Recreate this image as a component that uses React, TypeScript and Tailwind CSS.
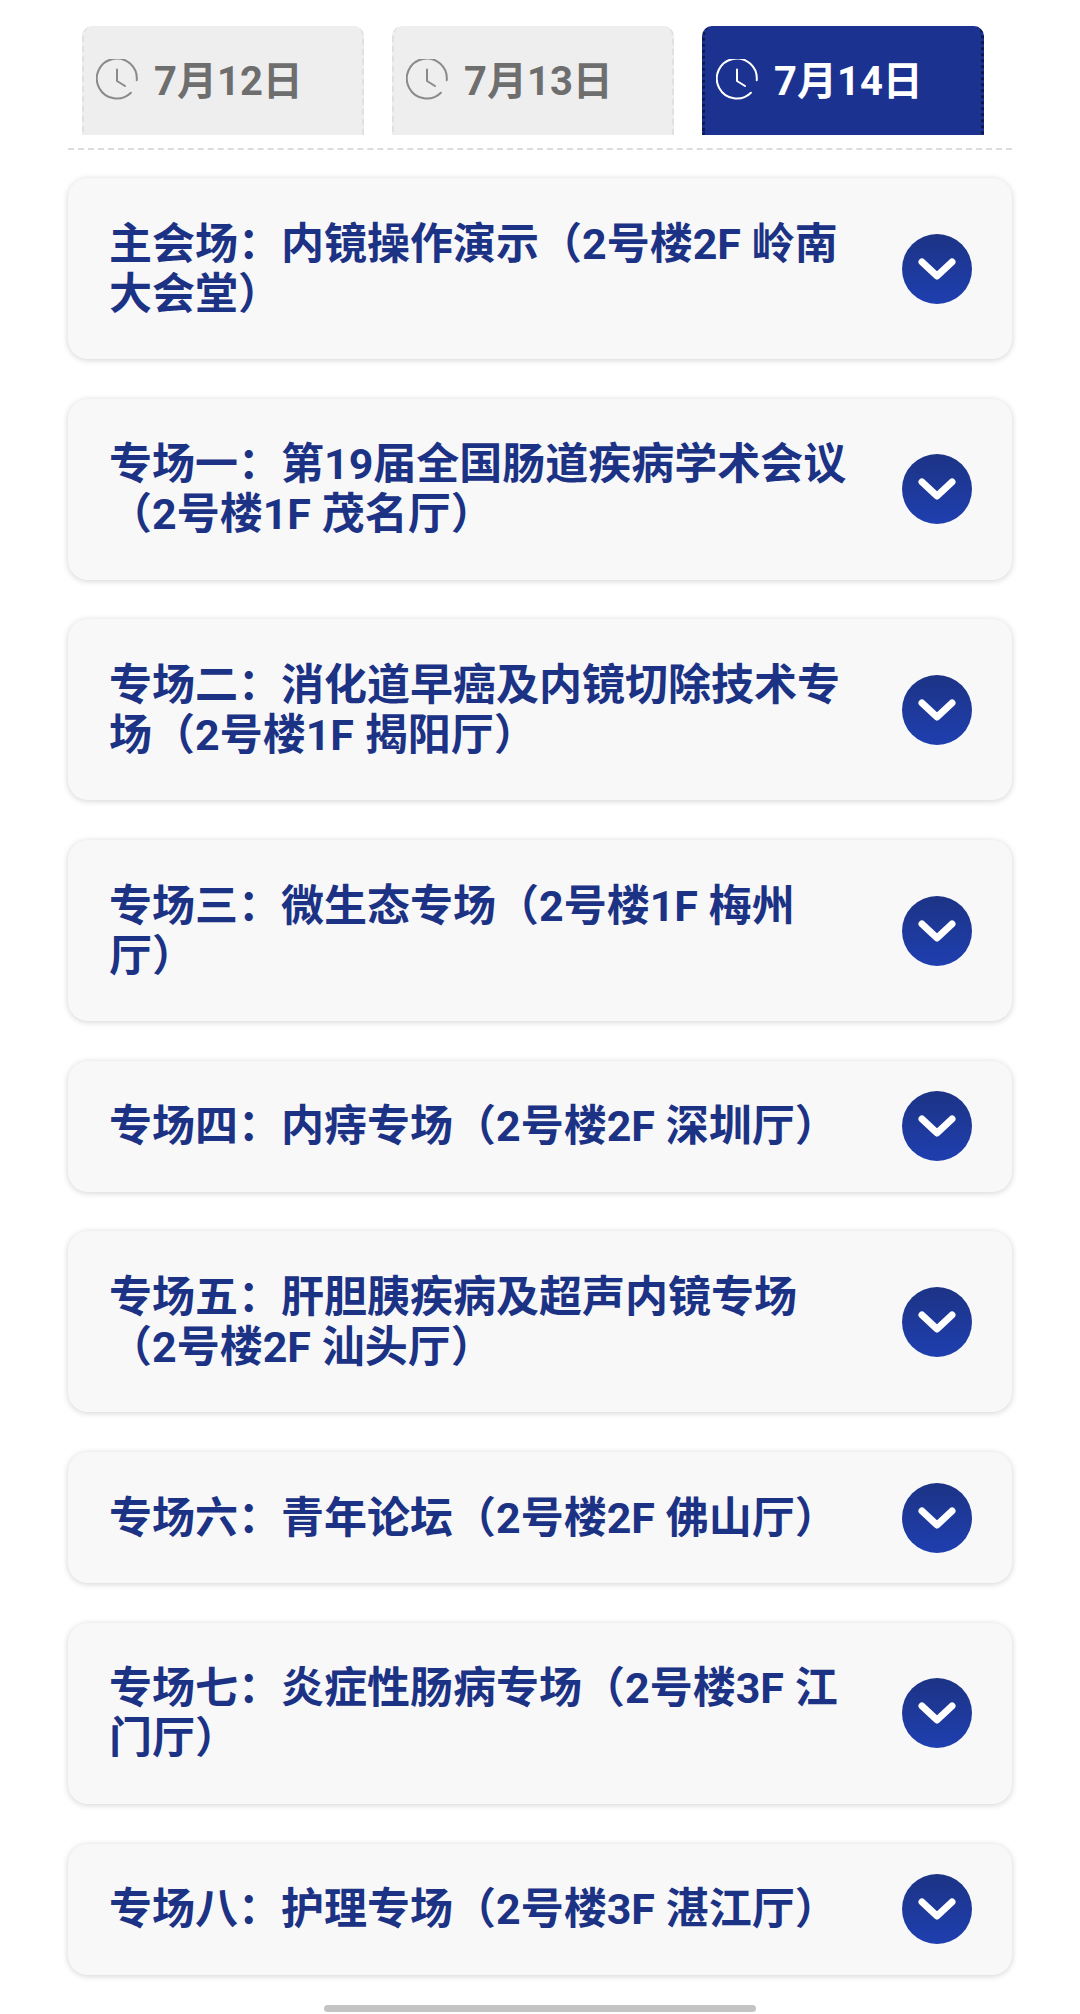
import React from "react";

const font = { fontFamily: 'Roboto, "Noto Sans CJK SC", "Noto Sans", sans-serif' };

const C = "\uFF1A";
const L = "\uFF08";
const R = "\uFF09";

const sessions = [
  `主会场${C}内镜操作演示${L}2号楼2F 岭南大会堂${R}`,
  `专场一${C}第19届全国肠道疾病学术会议${L}2号楼1F 茂名厅${R}`,
  `专场二${C}消化道早癌及内镜切除技术专场${L}2号楼1F 揭阳厅${R}`,
  `专场三${C}微生态专场${L}2号楼1F 梅州厅${R}`,
  `专场四${C}内痔专场${L}2号楼2F 深圳厅${R}`,
  `专场五${C}肝胆胰疾病及超声内镜专场${L}2号楼2F 汕头厅${R}`,
  `专场六${C}青年论坛${L}2号楼2F 佛山厅${R}`,
  `专场七${C}炎症性肠病专场${L}2号楼3F 江门厅${R}`,
  `专场八${C}护理专场${L}2号楼3F 湛江厅${R}`,
];

function Clock({ active }: { active: boolean }) {
  const c = active ? "#ffffff" : "#8a8a8a";
  return (
    <svg width="42" height="42" viewBox="0 0 42 42" fill="none" stroke={c} strokeWidth="2" strokeLinecap="round" strokeLinejoin="round" className="shrink-0">
      <path d="M33 35.5A20 20 0 1 1 40.5 24" transform="rotate(-8 21 21)" />
      <path d="M21 10.5V22l8 5" />
    </svg>
  );
}

function Tab({ label, active }: { label: string; active: boolean }) {
  return (
    <div
      className={
        active
          ? "w-[282px] h-[109px] pl-[11px] flex items-start pt-[33px] gap-[16px] rounded-t-[10px] bg-[#1c3290] border-x-[3px] border-dotted border-[#0e1a4d] text-white"
          : "w-[282px] h-[109px] pl-[12px] flex items-start pt-[33px] gap-[16px] rounded-t-[10px] bg-[#eeeeee] border-x-2 border-dashed border-[#e0e0e0] text-[#6e6e6e]"
      }
    >
      <Clock active={active} />
      <span className="text-[40px] leading-[46px] font-bold">{label}</span>
    </div>
  );
}

function Card({ text }: { text: string }) {
  return (
    <div className="mx-[68px] mb-[39.7px] flex items-center justify-between pl-[41px] pr-[40px] bg-[#f8f8f9] rounded-[20px] shadow-[0_1px_6px_rgba(0,0,0,0.18)]">
      <div className="w-[740px] py-[40.5px] text-[43px] leading-[50px] font-bold text-[#1c3385]">{text}</div>
      <div className="w-[70px] h-[70px] rounded-full bg-gradient-to-b from-[#1c3385] to-[#1f3fb0] flex items-center justify-center shrink-0">
        <svg width="40" height="26" viewBox="0 0 40 26" fill="none" stroke="#fff" strokeWidth="7" strokeLinecap="round" strokeLinejoin="round">
          <path d="M5 6l15 14L35 6" />
        </svg>
      </div>
    </div>
  );
}

export default function App() {
  return (
    <div className="relative w-[1080px] h-[2014px] bg-white overflow-hidden" style={font}>
      <div className="flex gap-[28px] pl-[82px] pt-[26px]">
        <Tab label="7月12日" active={false} />
        <Tab label="7月13日" active={false} />
        <Tab label="7月14日" active={true} />
      </div>
      <div className="mx-[68px] mt-[13px] mb-[28px] border-b-2 border-dashed border-[#dcdcdc]" />
      {sessions.map((s) => (
        <Card key={s} text={s} />
      ))}
      <div className="absolute left-[324px] bottom-[2px] w-[432px] h-[7px] rounded-full bg-[#c4c4c4]" />
    </div>
  );
}
